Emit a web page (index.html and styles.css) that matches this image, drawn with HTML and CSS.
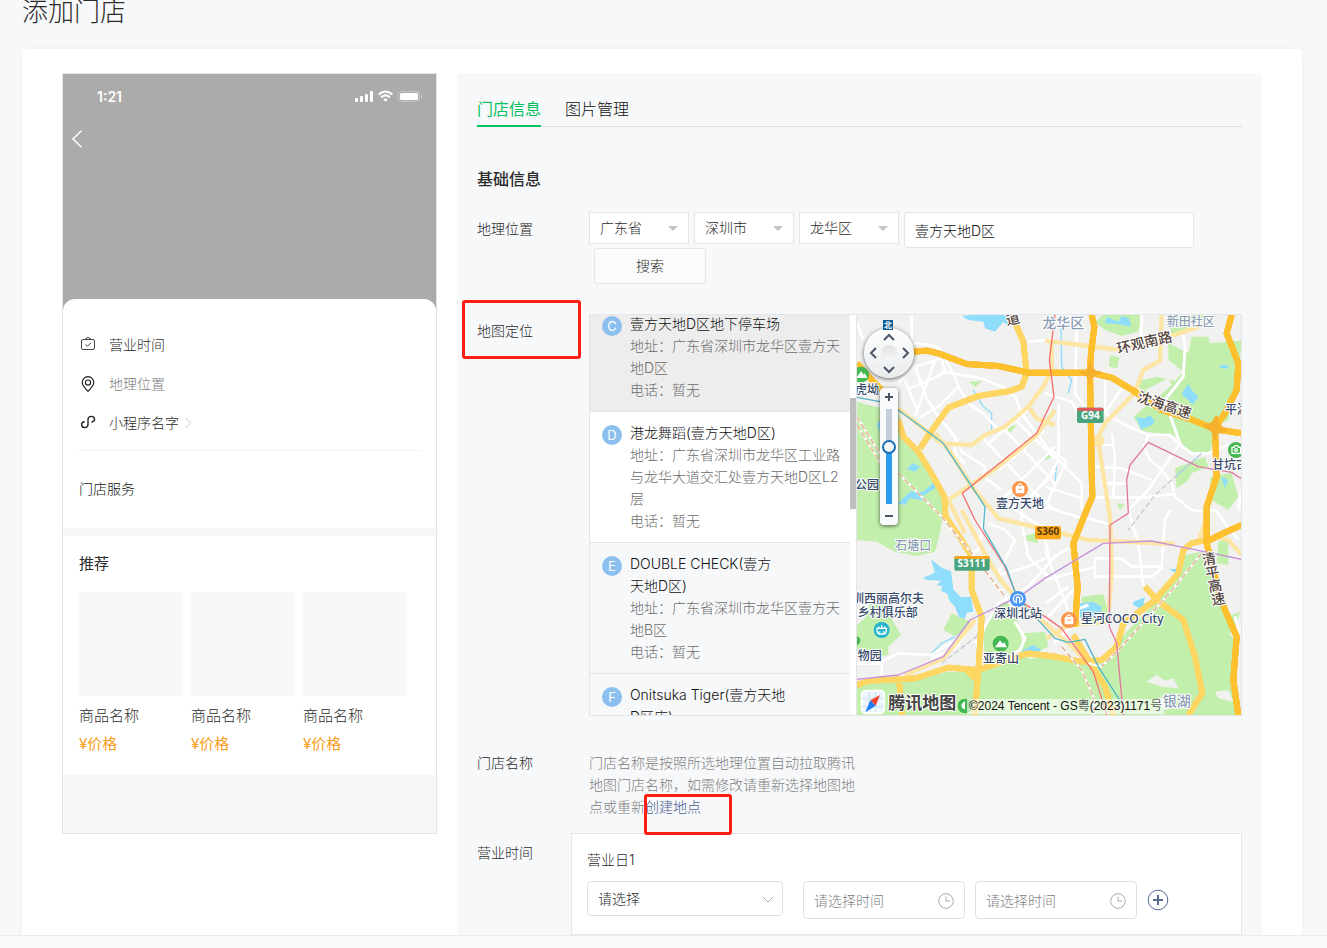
FILE: index.html
```html
<!DOCTYPE html>
<html lang="zh-CN">
<head>
    <meta charset="UTF-8">
    <meta name="viewport" content="width=device-width, initial-scale=1.0">
    <title>添加门店</title>
    <link rel="stylesheet" href="styles.css">
</head>
<body>
    <main class="page">
        <h1 class="page-title">添加门店</h1>

        <div class="card">
            <!-- Phone preview -->
            <section class="phone">
                <div class="cover">
                    <div class="status-bar">
                        <span class="clock">1:21</span>
                        <svg class="status-icons" viewBox="0 0 68 14" width="68" height="14">
                            <g fill="#fff">
                                <rect x="0" y="8" width="3" height="4" rx="1"/>
                                <rect x="5" y="6" width="3" height="6" rx="1"/>
                                <rect x="10" y="4" width="3" height="8" rx="1"/>
                                <rect x="15" y="1" width="3" height="11" rx="1"/>
                                <rect x="45" y="3" width="18" height="7" rx="1.5"/>
                                <path d="M66 5v3.500q1-.6 1-1.700T66 5z" opacity=".5"/>
                                <path d="M30.500 11.700l-2.300-2.300q2.300-1.700 4.600 0z"/>
                            </g>
                            <rect x="43.500" y="1.500" width="21" height="10" rx="2.500" fill="none" stroke="#fff" opacity=".3"/>
                            <path d="M23.600 4.400q6.900-5.800 13.800 0M26 7.200q4.500-3.700 9 0" fill="none" stroke="#fff" stroke-width="2"/>
                        </svg>
                    </div>
                    <button type="button" class="back" aria-label="返回">
                        <svg viewBox="0 0 12 18" width="12" height="18"><path d="M10.500 .800L2 9l8.500 8.200" fill="none" stroke="#fff" stroke-width="1.500"/></svg>
                    </button>
                </div>

                <div class="sheet">
                    <ul class="store-rows">
                        <li>
                            <svg viewBox="0 0 16 16" width="16" height="16" fill="none" stroke="#444"><rect x="1.500" y="2.500" width="13" height="10" rx="1.500"/><path d="M4.500 2.500L8 .300l3.500 2.200M5.500 7.500l2 1.800 3.500-3.500"/></svg>
                            <span>营业时间</span>
                        </li>
                        <li class="muted">
                            <svg viewBox="0 0 16 16" width="16" height="16" fill="none" stroke="#222" stroke-width="1.200"><path d="M8 15.300C4.500 11.800 2.200 9.300 2.200 6.500a5.800 5.800 0 0 1 11.600 0c0 2.800-2.300 5.300-5.800 8.800z"/><circle cx="8" cy="6.600" r="2.600"/></svg>
                            <span>地理位置</span>
                        </li>
                        <li>
                            <svg viewBox="0 0 16 16" width="16" height="16" fill="none" stroke="#222" stroke-width="1.400" stroke-linecap="round"><path d="M4.200 6.800C.500 7.500 1 12.500 4.500 12.500c2 0 3.500-1.300 3.500-3V4.400c0-1.700 1.400-3 3.300-3 3.800 0 4.500 4.800.700 5.600"/></svg>
                            <span>小程序名字</span>
                            <svg class="more" viewBox="0 0 6 12" width="6" height="12"><path d="M.500 1L5.500 6l-5 5" fill="none" stroke="#ccc"/></svg>
                        </li>
                    </ul>
                    <div class="service">门店服务</div>
                </div>

                <div class="recommend">
                    <h2 class="recommend-title">推荐</h2>
                    <ul class="goods">
                        <li><div class="thumb"></div><p>商品名称</p><p class="price">¥价格</p></li>
                        <li><div class="thumb"></div><p>商品名称</p><p class="price">¥价格</p></li>
                        <li><div class="thumb"></div><p>商品名称</p><p class="price">¥价格</p></li>
                    </ul>
                </div>
            </section>

            <!-- Edit form -->
            <section class="panel">
                <nav class="tabs">
                    <a href="#info" class="tab active">门店信息</a>
                    <a href="#pics" class="tab">图片管理</a>
                </nav>

                <form id="info">
                    <h2 class="section-title">基础信息</h2>

                    <div class="row">
                        <label class="label" for="address">地理位置</label>
                        <div class="address">
                            <span class="picker"><select aria-label="省"><option>广东省</option></select></span>
                            <span class="picker"><select aria-label="市"><option>深圳市</option></select></span>
                            <span class="picker"><select aria-label="区"><option>龙华区</option></select></span>
                            <input type="text" id="address" class="text-box" value="壹方天地D区">
                            <button type="button" class="search">搜索</button>
                        </div>
                    </div>

                    <div class="row row-map">
                        <span class="label"><span class="mark mark-label">地图定位</span></span>
                        <div class="locator">
                            <div class="places">
                                <ul class="place-list">
                                    <li class="place hover">
                                        <span class="badge">C</span>
                                        <div><h3>壹方天地D区地下停车场</h3><p>地址：广东省深圳市龙华区壹方天地D区</p><p>电话：暂无</p></div>
                                    </li>
                                    <li class="place current">
                                        <span class="badge">D</span>
                                        <div><h3>港龙舞蹈(壹方天地D区)</h3><p>地址：广东省深圳市龙华区工业路与龙华大道交汇处壹方天地D区L2层</p><p>电话：暂无</p></div>
                                    </li>
                                    <li class="place">
                                        <span class="badge">E</span>
                                        <div><h3>DOUBLE CHECK(壹方<br>天地D区)</h3><p>地址：广东省深圳市龙华区壹方天地B区</p><p>电话：暂无</p></div>
                                    </li>
                                    <li class="place">
                                        <span class="badge">F</span>
                                        <div><h3>Onitsuka Tiger(壹方天地D区店)</h3></div>
                                    </li>
                                </ul>
                                <div class="scrollbar"><div class="scroll-thumb"></div></div>
                            </div>

                            <div class="map">
                                <svg class="map-canvas" viewBox="6 15 1155 1200" preserveAspectRatio="xMinYMin slice">
                                    <rect x="6" y="15" width="3000" height="1200" fill="#f1f1f0"/>
                                    <!-- parks -->
                                    <g fill="#c3efac">
                                        <path d="M6 275L60 290 130 300 150 400 200 440 265 545 262 630 250 690 240 725 185 738 120 725 65 695 6 690z"/>
                                        <path d="M6 945L30 925 50 870 105 875 112 930 138 975 100 1010 100 1035 40 1045 6 1030z"/>
                                        <path d="M290 910L345 935 345 960 300 978 265 960zM400 930L420 890 455 873 485 915 500 990 520 1050 440 1070 390 1045 385 980z"/>
                                        <path d="M6 1125L180 1110 280 1085 370 1085 470 1050 600 1040 740 1060 790 990 895 885 970 790 990 735 1040 725 1075 740 1090 840 1120 920 1155 905 1145 940 1125 970 1145 1010 1145 1215 6 1215z"/>
                                        <path d="M842 215L905 200 960 212 985 185 940 150 940 100 1000 130 1010 80 1060 80 1065 100 1160 92 1150 200 1120 330 1080 345 1065 430 1010 435 965 380 860 362 836 320 870 290 860 240z"/>
                                        <path d="M720 35L745 15 860 15 850 65 800 78 750 60zM765 135L792 142 788 175 762 170zM935 15L1060 15 1000 40 1010 62 950 72zM960 475L1050 440 1060 470 1010 490 1000 510 965 535zM1065 500L1130 488 1150 560 1120 600 1070 570zM680 860L745 852 758 900 745 945 680 935zM1090 695L1120 680 1120 765 1085 760zM565 435L590 422 592 440 572 450zM340 216L382 212 362 230zM450 350L485 345 465 370zM785 580L810 582 795 600z"/>
                                        <path d="M505 970L570 965 580 1010 540 1030 505 1030zM500 680L540 670 550 700 510 690z"/>
                                    </g>
                                    <g fill="#f1f1f0">
                                        <path d="M875 1115L905 1095 930 1112 955 1105 970 1135 920 1130zM1080 1145L1120 1140 1135 1175 1090 1165zM900 1170L935 1155 960 1170 960 1190 930 1200zM870 240L940 205 950 225 900 270z"/>
                                    </g>
                                    <!-- water -->
                                    <g fill="#8edefb">
                                        <path d="M320 18L350 15 455 15 460 50 445 35 420 65 390 55 385 35 340 30zM755 20L790 35 800 18 822 25 828 50 790 42 750 40z"/>
                                        <path d="M843 322L870 325 885 315 900 335 885 348 858 358 850 340zM990 235L1002 222 1010 240 1030 262 1012 285 995 265 980 255zM1095 165L1120 165 1118 176 1095 174z"/>
                                        <path d="M202 805L240 788 228 748 250 765 262 775 288 783 295 838 318 862 348 860 355 905 335 908 330 926 312 922 300 890 282 870 278 852 258 842 262 828 245 826 258 812 218 810z"/>
                                        <path d="M155 478L172 460 195 470 180 485zM128 580L165 545 205 545 250 505 240 535 200 560 210 572 165 565 150 585zM75 330L65 345 75 365z"/>
                                        <path d="M675 880L715 875 740 890 735 915 675 922zM835 875L870 862 865 880 890 890 860 898 835 885zM942 778L980 775 975 795zM500 1022L535 1005 560 1020 530 1035zM1098 500L1120 510 1110 535z"/>
                                    </g>
                                    <g fill="none" stroke="#8edefb" stroke-width="4">
                                        <path d="M618 30L620 170 650 210 640 250M615 330L600 520M355 240L385 290 410 310 410 360M965 495L1030 440M230 1030L260 1000 300 980"/>
                                    </g>
                                    <!-- minor roads -->
                                    <g class="road-edge"><use href="#minor"/></g>
                                    <g id="minor" class="road-fill">
                                        <path d="M6 40L25 90M170 15V100L230 105 260 120M130 220L180 170 260 145 270 185 245 200 165 235M180 170L215 265 250 320 300 380 300 430 330 460M150 210L190 310M240 150L180 320"/>
                                        <path d="M260 185L380 205 450 235 480 260 500 310 590 430M270 145L300 200 310 230 340 280 385 310 440 370M310 230L250 290 190 325M520 95L590 88"/>
                                        <path d="M385 385L540 550 600 600M440 350L600 520M480 330L600 445M300 380L320 425 390 470 385 500 440 540M570 360L430 480M600 410L450 560M600 480L500 590M530 290L400 400"/>
                                        <path d="M666 15L660 250 690 290M570 250L650 275 665 305M612 280L610 450 570 520M570 410L635 455 575 580M600 440L680 520 680 600M570 530L680 565M570 590L700 630"/>
                                        <path d="M750 210L750 300 735 340M800 235L750 310 820 350 880 375 945 375 975 405 1010 430 1060 430 1120 405 1160 400M985 75L990 110 985 200 930 270 950 330 975 400 920 480 880 540 820 600"/>
                                        <path d="M865 410L885 450 920 480 950 520 960 560 1010 600 1040 605M730 405L770 405M770 370L780 440 775 560M720 470L800 475 890 510M740 520L820 520M720 562L870 562 955 552M880 375L865 415M860 15L858 90"/>
                                        <path d="M500 600L500 640 520 740 580 800M400 640L450 660 480 690 430 790M390 600L370 720 330 740M480 600L560 650 585 750M430 795L520 770 570 745M360 1000L430 880 520 830 600 740 640 715"/>
                                        <path d="M570 810L720 770 720 745 800 745 830 770 920 770 930 630 945 600M720 770V800H890L925 770M820 600L850 700 865 830M700 625L770 645M570 720L640 900M570 880L640 830M570 930L655 840"/>
                                        <path d="M6 1060L70 1060 130 1030 230 1035 300 990M80 1050V1100M230 1045L300 1015 340 960M480 935L510 985 495 1020 430 1060M1040 605L1080 600 1150 690M1140 920L1155 970M660 900L700 885M595 1000L650 950M1160 540L1150 590 1160 600"/>
                                    </g>
                                    <!-- yellow roads -->
                                    <g fill="none" stroke="#fde5a3" stroke-width="13" stroke-linejoin="round">
                                        <path d="M130 295L260 400 350 405 390 375 450 350 520 290 565 230 590 180 590 100M570 92L700 108 780 118 900 95 1030 50M920 15L915 152 865 180 838 250 750 340 728 385 765 620 770 780 762 900"/>
                                        <path d="M240 370L285 425 350 530 410 600 430 625 600 665 700 690 960 702M600 300L545 375 430 470 280 570 330 670M320 600L400 750 440 815 490 870 640 1000 700 1060M520 290L545 325 600 345M360 930L265 1045 150 1095M575 985L640 945 770 935M1080 680L1120 690 1160 735M715 385H740V400H715M1030 695L1050 640 1065 640"/>
                                    </g>
                                    <g class="yellow-edge"><use href="#yellow"/></g>
                                    <g id="yellow" class="yellow-fill">
                                        <path d="M483 45L505 95 515 190 500 230 465 243 370 258 280 293 235 355 195 415"/>
                                        <path d="M130 330L145 380 190 425 235 500 268 560 272 620 320 690 350 740 350 840 380 920 372 1050 360 1215"/>
                                        <path d="M6 1125L40 1113 180 1105 280 1073 370 1080 470 1045 520 1030 600 1040 680 1055 740 1050 785 1010 805 940 895 875 970 790 985 720 1010 700 1055 690"/>
                                        <path d="M870 830L905 870 985 930 1020 1040 1042 1150 1000 1215M655 975L700 1050 750 1130 775 1215M133 1120L142 1215M335 1080L360 1105"/>
                                    </g>
                                    <!-- highways -->
                                    <g class="highway-edge"><use href="#highway"/></g>
                                    <g id="highway" class="highway-fill">
                                        <path d="M6 160L50 210 80 240M120 128L215 122 250 130 335 162 430 168 520 188 705 188 770 203 840 245 920 300 1000 325 1080 358 1160 370"/>
                                        <path d="M710 15L718 50 708 130 705 190 710 480 712 560 695 600 655 700 668 830 660 950"/>
                                        <path d="M1130 15L1115 70 1150 160 1145 240 1110 310 1080 355 1085 500 1055 590 1055 700 1090 840 1110 900 1145 980 1135 1110 1150 1215M1160 645L1100 672 1055 695"/>
                                    </g>
                                    <path d="M675 188Q705 190 705 155 708 190 738 188 705 190 705 222 705 190 675 188zM1045 345Q1075 350 1085 318 1085 350 1115 362 1080 360 1080 390 1080 355 1045 345z" fill="#f6b02c" stroke="#f6b02c" stroke-width="8"/>
                                    <!-- rail -->
                                    <g fill="none" stroke-width="4" stroke-linejoin="round">
                                        <path d="M6 320L80 440M6 345L80 465M130 490L260 620 350 730 450 860M1040 730L960 830 800 1010 740 1070 700 1060M620 1010L680 1080 715 1160V1215" stroke="#fff" stroke-width="7"/>
                                        <path d="M6 320L80 440M6 345L80 465M130 490L260 620 350 730 450 860M1040 730L960 830 800 1010 740 1070M620 1010L680 1080 715 1160V1215" stroke="#dfaa88" stroke-dasharray="18 8"/>
                                        <path d="M1040 430L900 555 820 660M260 1060L370 975" stroke="#c6c8d0" stroke-dasharray="16 8"/>
                                        <path d="M6 1108L130 1095 265 1040 345 930 500 855 570 805 745 700 890 693 1000 715 1160 748" stroke="#c592dc"/>
                                        <path d="M765 645L820 610 815 510 825 465 880 397 1030 470 1130 487 1160 507M765 645L763 950 785 1000 805 1215" stroke="#e2799f"/>
                                        <path d="M600 15L583 150 597 260 545 370 322 550 360 630 450 770 490 870 570 920 620 955 715 1085 755 1215" stroke="#f77072"/>
                                        <path d="M6 262L75 275 130 300 265 400 390 590 385 655 455 775 485 860 600 985 640 997 690 988 730 1070 800 1180" stroke="#53b5c5"/>
                                    </g>
                                    <!-- road shields -->
                                    <g class="shield">
                                        <rect x="666" y="293" width="80" height="46" rx="6" fill="#4aa57e"/><path d="M666 302v-3q0-6 6-6h68q6 0 6 6v3z" fill="#e35a5a"/>
                                        <text x="706" y="326" fill="#fff">G94</text>
                                        <rect x="298" y="738" width="106" height="44" rx="6" fill="#4aa57e"/><path d="M298 747v-3q0-6 6-6h94q6 0 6 6v3z" fill="#f5a623"/>
                                        <text x="350" y="770" fill="#fff">S3111</text>
                                        <rect x="540" y="648" width="78" height="40" rx="6" fill="#f9a819"/>
                                        <text x="579" y="674" fill="#5a3a0a">S360</text>
                                    </g>
                                    <!-- points of interest -->
                                    <g fill="none" stroke="#fff" stroke-width="4">
                                        <circle cx="495" cy="537" r="24" fill="#fb9549" stroke="none"/><path d="M484 530h22v18h-22z" fill="#fff"/><path d="M488 528q7-14 14 0"/><path d="M490 536q5 7 10 0" stroke="#fb9549" stroke-width="3"/>
                                        <circle cx="642" cy="930" r="24" fill="#fb9549" stroke="none"/><path d="M631 923h22v18h-22z" fill="#fff"/><path d="M635 921q7-14 14 0"/><path d="M637 929q5 7 10 0" stroke="#fb9549" stroke-width="3"/>
                                        <circle cx="489" cy="867" r="24" fill="#4796f5" stroke="none"/><path d="M481 877q-6-4-6-10a14 14 0 0 1 28 0q0 6-6 10M484 880v-14a5 5 0 0 1 10 0v14"/>
                                        <circle cx="437" cy="1001" r="24" fill="#45b854" stroke="none"/><path d="M420 1012l15-21 8 10 5-4 8 15z" fill="#fff" stroke="none"/>
                                        <circle cx="18" cy="194" r="24" fill="#45b854" stroke="none"/><path d="M4 204l14-20 8 10 4-4 7 14z" fill="#fff" stroke="none"/>
                                        <circle cx="80" cy="960" r="24" fill="#25b5cf" stroke="none"/><path d="M66 955h28v8q-2 9-8 9H74q-6 0-8-9zM80 946v12M70 950l4 6M90 950l-4 6M74 964v4M86 964v4"/>
                                        <circle cx="1143" cy="420" r="24" fill="#45b854" stroke="none"/><path d="M1131 412h6l3-5h8l3 5h6v18h-26z"/><circle cx="1143" cy="420" r="4"/>
                                        <circle cx="2" cy="992" r="14" fill="#45b854" stroke="none"/>
                                        <circle cx="330" cy="1188" r="22" fill="#45b854" stroke="none"/><path d="M330 1174q-14 8-10 16t10 8z" fill="#fff" stroke="none"/>
                                    </g>
                                    <g class="map-text">
                                        <text x="423" y="594">壹方天地</text>
                                        <text x="0" y="252">虎坳</text>
                                        <text x="0" y="537">公园</text>
                                        <text x="-9" y="878">圳西丽高尔夫</text>
                                        <text x="8" y="920">乡村俱乐部</text>
                                        <text x="8" y="1050">物园</text>
                                        <text x="417" y="924">深圳北站</text>
                                        <text x="384" y="1059">亚寄山</text>
                                        <text x="678" y="940">星河COCO City</text>
                                        <text x="1071" y="476">甘坑古镇</text>
                                        <text x="1110" y="312">平湖</text>
                                    </g>
                                    <g class="map-text area">
                                        <text x="562" y="54" class="big">龙华区</text>
                                        <text x="935" y="48">新田社区</text>
                                        <text x="121" y="720">石塘口</text>
                                        <text x="923" y="1188" class="big">银湖</text>
                                    </g>
                                    <g class="map-text street">
                                        <text transform="translate(456 46) rotate(-12)">道</text>
                                        <text transform="translate(790 131) rotate(-13)">环观南路</text>
                                        <text transform="translate(844 272) rotate(19)">沈海高速</text>
                                        <text transform="translate(1044 766) rotate(-10)">清</text>
                                        <text transform="translate(1054 806) rotate(-10)">平</text>
                                        <text transform="translate(1062 846) rotate(-10)">高</text>
                                        <text transform="translate(1072 886) rotate(-10)">速</text>
                                    </g>
                                    <!-- map logo -->
                                    <rect x="20" y="1142" width="68" height="68" rx="12" fill="#eef6fc" stroke="#fff" stroke-width="5"/>
                                    <path d="M42 1145v60M20 1165h66M62 1145v60M20 1190h66" stroke="#d5e9f6" stroke-width="5"/>
                                    <path d="M75 1155L46 1171 62 1187z" fill="#f4442e"/><path d="M31 1207L46 1171 62 1187z" fill="#1e7bf2"/>
                                    <text x="100" y="1196" class="map-brand">腾讯地图</text>
                                </svg>

                                <div class="pan">
                                    <button type="button" class="up" aria-label="向上"><svg viewBox="0 0 12 8" width="12" height="8"><path d="M1 7l5-5 5 5"/></svg></button>
                                    <button type="button" class="left" aria-label="向左"><svg viewBox="0 0 8 12" width="8" height="12"><path d="M7 1L2 6l5 5"/></svg></button>
                                    <span class="hub"></span>
                                    <button type="button" class="right" aria-label="向右"><svg viewBox="0 0 8 12" width="8" height="12"><path d="M1 1l5 5-5 5"/></svg></button>
                                    <button type="button" class="down" aria-label="向下"><svg viewBox="0 0 12 8" width="12" height="8"><path d="M1 1l5 5 5-5"/></svg></button>
                                </div>
                                <span class="north">北</span>
                                <div class="zoom">
                                    <button type="button" aria-label="放大"><svg viewBox="0 0 10 10" width="10" height="10"><path d="M5 1v8M1 5h8"/></svg></button>
                                    <input type="range" min="0" max="100" value="62" aria-label="缩放">
                                    <button type="button" aria-label="缩小"><svg viewBox="0 0 10 10" width="10" height="10"><path d="M1 5h8"/></svg></button>
                                </div>
                                <span class="copyright">©2024 Tencent - GS粤(2023)1171号</span>
                            </div>
                        </div>
                    </div>

                    <div class="row row-name">
                        <span class="label">门店名称</span>
                        <p class="help">门店名称是按照所选地理位置自动拉取腾讯地图门店名称，如需修改请重新选择地图地点或重新<a href="#create" class="mark mark-link">创建地点</a></p>
                    </div>

                    <div class="row row-hours">
                        <label class="label" for="day">营业时间</label>
                        <div class="hours">
                            <p>营业日1</p>
                            <div class="hours-fields">
                                <span class="day">
                                    <select id="day"><option>请选择</option></select>
                                    <svg viewBox="0 0 12 8" width="12" height="8"><path d="M1 1l5 5 5-5" fill="none" stroke="#aaa"/></svg>
                                </span>
                                <span class="time">
                                    <input type="text" placeholder="请选择时间" aria-label="开始时间">
                                    <svg viewBox="0 0 16 16" width="16" height="16"><circle cx="8" cy="8" r="7.300"/><path d="M8 3.500V8h4"/></svg>
                                </span>
                                <span class="time">
                                    <input type="text" placeholder="请选择时间" aria-label="结束时间">
                                    <svg viewBox="0 0 16 16" width="16" height="16"><circle cx="8" cy="8" r="7.300"/><path d="M8 3.500V8h4"/></svg>
                                </span>
                                <button type="button" class="add" aria-label="添加时间">
                                    <svg viewBox="0 0 22 22" width="22" height="22"><circle cx="11" cy="11" r="9.800"/><path d="M11 6v10M6 11h10" stroke-width="2"/></svg>
                                </button>
                            </div>
                        </div>
                    </div>
                </form>
            </section>
        </div>
    </main>
    <footer class="bottom-bar"></footer>
</body>
</html>
```
FILE: styles.css
```css
*, *::after {
    box-sizing: border-box;
}
body {
    margin: 0;
    height: 100vh;
    display: flex;
    flex-direction: column;
    background-color: #f7f8fa;
    color: #2b2b2b;
    font-family: Inter, "Noto Sans CJK SC", sans-serif;
    font-size: 14px;
    font-weight: 300;
    line-height: 22px;
}
h1, h2, h3, p, ul {
    margin: 0;
    padding: 0;
    list-style: none;
    font-weight: 300;
}
button, input, select {
    font: inherit;
    color: inherit;
}
button {
    padding: 0;
    border: 0;
    background: none;
    cursor: pointer;
}
svg {
    display: block;
}

.page {
    flex: 1;
    min-height: 0;
    display: flex;
    flex-direction: column;
    overflow: hidden;
    padding: 0 25px 0 22px;
}
.page-title {
    flex: none;
    height: 49px;
    font-size: 26px;
    line-height: 24px;
}
.card {
    flex: 1 0 auto;
    display: flex;
    gap: 20px;
    padding: 24px 40px 0;
    background: #fff;
    border-radius: 2px;
    box-shadow: 0 0 10px rgba(0, 0, 0, 0.03);
}
.bottom-bar {
    flex: none;
    height: 13px;
    background: #f9f9f9;
    border-top: 1px solid #ececec;
}

/* phone preview */
.phone {
    flex: none;
    align-self: flex-start;
    width: 375px;
    padding-bottom: 58px;
    border: 1px solid #e4e4e6;
    background: #f6f6f6;
}
.cover {
    height: 237px;
    padding: 12px 13px 0 8px;
    background: #ababab;
}
.status-bar {
    display: flex;
    justify-content: space-between;
    align-items: center;
    padding-left: 26px;
    color: #fff;
}
.clock {
    font-size: 14px;
    font-weight: 600;
}
.back {
    display: block;
    margin-top: 22px;
}
.sheet {
    margin-top: -12px;
    padding: 26px 16px 0;
    border-radius: 12px 12px 0 0;
    background: #fff;
}
.store-rows {
    padding-bottom: 8px;
    border-bottom: 1px solid #f2f2f2;
}
.store-rows li {
    display: flex;
    align-items: center;
    height: 39px;
    padding-left: 1px;
}
.store-rows span {
    padding-left: 13px;
}
.store-rows .muted {
    color: #808080;
}
.more {
    margin-left: 6px;
}
.service {
    line-height: 76px;
    padding-bottom: 1px;
    color: #111;
}
.recommend {
    margin-top: 8px;
    padding: 0 16px 17px;
    background: #fff;
    font-size: 15px;
}
.recommend-title {
    font-size: 15px;
    font-weight: 400;
    line-height: 56px;
}
.goods {
    display: flex;
    gap: 8px;
}
.goods p {
    line-height: 28px;
}
.goods .price {
    color: #fa9d1b;
    font-weight: 400;
}
.thumb {
    width: 104px;
    height: 104px;
    margin-bottom: 6px;
    background: #f7f8fa;
}

/* form panel */
.panel {
    flex: 1;
    min-width: 0;
    padding: 20px;
    background: #f7f8fa;
}
.tabs {
    display: flex;
    gap: 24px;
    border-bottom: 1px solid #dfe0e3;
    font-size: 16px;
    line-height: 32px;
}
.tab {
    margin-bottom: -1px;
    border-bottom: 2px solid transparent;
    color: #111;
    text-decoration: none;
}
.tab.active {
    color: #07c160;
    border-color: #07c160;
    font-weight: 400;
}
.section-title {
    margin: 40px 0 21px;
    font-size: 16px;
    font-weight: 500;
    line-height: 24px;
}
.row {
    display: flex;
    align-items: flex-start;
}
.label {
    flex: none;
    width: 112px;
    padding-top: 6px;
}
.address {
    flex: 1;
    display: flex;
    flex-wrap: wrap;
    align-items: flex-start;
    column-gap: 5px;
}
.picker, .day, .time {
    position: relative;
}
.picker::after {
    content: "";
    position: absolute;
    right: 11px;
    top: 14px;
    border: 5px solid transparent;
    border-top-color: #c4c4c4;
    border-bottom: 0;
    pointer-events: none;
}
.picker select {
    display: block;
    appearance: none;
    width: 100px;
    height: 32px;
    padding: 0 10px;
    border: 1px solid #e4e5e8;
    border-radius: 0;
    background: #fff;
}
.text-box {
    width: 290px;
    height: 36px;
    padding: 0 10px;
    border: 1px solid #e4e5e8;
    border-radius: 3px;
    color: #111;
}
.search {
    width: 112px;
    height: 36px;
    margin-left: 5px;
    border: 1px solid #e4e5e8;
    border-radius: 3px;
    background: #fbfbfc;
}

/* red highlight frames */
.mark {
    position: relative;
}
.mark::after {
    content: "";
    position: absolute;
    border: 3px solid #ff1f12;
    border-radius: 3px;
    pointer-events: none;
}
.mark-label::after {
    left: -15px;
    top: -20px;
    width: 119px;
    height: 59px;
}
.mark-link::after {
    left: -1px;
    top: -2px;
    width: 88px;
    height: 41px;
}

.row-map {
    margin-top: 30px;
}
.row-map .label {
    display: flex;
}
.locator {
    flex: 1;
    display: flex;
    height: 402px;
    border: 1px solid #e4e5e8;
}
.places {
    flex: none;
    display: flex;
    width: 267px;
    overflow: hidden;
    border-right: 1px solid #e4e5e8;
}
/* list is scrolled down to the third result */
.place-list {
    flex: 1;
    margin-top: -12px;
}
.place {
    display: flex;
    gap: 8px;
    padding: 10px 8px 10px 12px;
    border-bottom: 1px solid #e4e5e8;
}
.place.hover {
    background: #ededed;
}
.place.current {
    background: #fff;
}
.place h3 {
    max-width: 158px;
    font-size: 14px;
    color: #111;
}
.place p {
    color: #6c6c6c;
}
.badge {
    flex: none;
    width: 20px;
    height: 20px;
    margin-top: 3px;
    border-radius: 50%;
    background: #8bbfee;
    color: #fff;
    font-size: 13px;
    font-weight: 400;
    line-height: 20px;
    text-align: center;
}
.scrollbar {
    width: 6px;
    padding-top: 83px;
    background: #fff;
}
.scroll-thumb {
    height: 111px;
    background: #bfbfbf;
}

/* map */
.map {
    position: relative;
    flex: 1;
    overflow: hidden;
}
.map-canvas {
    width: 100%;
    height: 100%;
}
.road-edge, .road-fill, .yellow-edge, .yellow-fill, .highway-edge, .highway-fill {
    fill: none;
    stroke-linejoin: round;
}
.road-fill {
    stroke: #fff;
    stroke-width: 8px;
}
.road-edge {
    filter: drop-shadow(0 0 2px #c9cedb);
}
.yellow-fill {
    stroke: #ffd661;
    stroke-width: 17px;
}
.yellow-edge {
    filter: drop-shadow(0 0 2px #e8b84a);
}
.highway-fill {
    stroke: #ffc02e;
    stroke-width: 18px;
}
.highway-edge {
    filter: drop-shadow(0 0 2px #d99a20);
}
.shield {
    font-family: "Noto Sans", sans-serif;
    font-size: 30px;
    font-weight: 700;
    text-anchor: middle;
}
.map-text, .map-brand {
    font-family: "Noto Sans", "Noto Sans CJK SC", sans-serif;
    font-size: 36px;
    font-weight: 500;
    fill: #35496a;
    stroke: #fff;
    stroke-width: 6px;
    stroke-linejoin: round;
    paint-order: stroke;
}
.area {
    fill: #8c9db3;
}
.area .big {
    font-size: 42px;
}
.street {
    font-size: 42px;
    fill: #54463e;
}
.map-brand {
    font-size: 51px;
    font-weight: 700;
    fill: #444;
}
.pan {
    position: absolute;
    left: 7px;
    top: 13px;
    width: 50px;
    height: 50px;
    display: grid;
    grid-template: 17px 16px 17px / 17px 16px 17px;
    place-items: center;
    border-radius: 50%;
    background: linear-gradient(#fff, #e9ebed);
    box-shadow: 0 1px 4px rgba(0, 0, 0, 0.6);
}
.pan path, .zoom path {
    fill: none;
    stroke: #4b5566;
    stroke-width: 2px;
}
.up, .down {
    grid-column: 2;
}
.left, .right, .hub {
    grid-row: 2;
}
.up {
    grid-row: 1;
}
.down {
    grid-row: 3;
}
.hub {
    width: 16px;
    height: 16px;
    border-radius: 50%;
    background: linear-gradient(#dfe1e4, #f8f8f8);
}
.north {
    position: absolute;
    left: 26px;
    top: 5px;
    padding: 0 1px;
    background: #0b5c93;
    color: #fff;
    font-family: "Noto Sans CJK SC", sans-serif;
    font-size: 8px;
    font-weight: 700;
    line-height: 10px;
}
.zoom {
    position: absolute;
    left: 23px;
    top: 73px;
    width: 18px;
    height: 137px;
    display: flex;
    flex-direction: column;
    align-items: center;
    border-radius: 4px;
    background: #f9fafb;
    box-shadow: 0 1px 4px rgba(0, 0, 0, 0.6);
}
.zoom button {
    display: grid;
    place-items: center;
    width: 18px;
    height: 18px;
}
.zoom input {
    appearance: none;
    writing-mode: vertical-lr;
    direction: rtl;
    flex: 1;
    min-height: 0;
    width: 14px;
    margin: 3px 0;
    background: linear-gradient(#c5cedd 40%, #2c9ced 40%) center / 6px 100% no-repeat;
}
.zoom input::-webkit-slider-thumb {
    appearance: none;
    width: 14px;
    height: 14px;
    border: 2px solid #1f6eb5;
    border-radius: 50%;
    background: #f4f6f8;
}
.copyright {
    position: absolute;
    left: 110px;
    bottom: 1px;
    padding: 0 2px;
    background: rgba(255, 255, 255, 0.6);
    color: #111;
    font-family: "Liberation Sans", "Noto Sans CJK SC", sans-serif;
    font-size: 12px;
    line-height: 15px;
    white-space: nowrap;
}

.row-name {
    margin-top: 36px;
}
.row-name .label {
    padding-top: 0;
}
.help {
    max-width: 268px;
    color: #808080;
}
.help a {
    display: inline-block;
    color: #455c8d;
    text-decoration: none;
}
.row-hours {
    margin-top: 15px;
}
.row-hours .label {
    width: 94px;
    padding-top: 9px;
}
.hours {
    flex: 1;
    padding: 15px;
    border: 1px solid #e4e5e8;
    background: #fff;
}
.hours-fields {
    display: flex;
    align-items: flex-start;
    gap: 10px;
    margin-top: 10px;
}
.day {
    margin-right: 10px;
}
.day select {
    display: block;
    appearance: none;
    width: 196px;
    height: 35px;
    padding: 0 10px;
    border: 1px solid #dcdfe6;
    border-radius: 4px;
    background: #fff;
}
.day svg {
    position: absolute;
    right: 9px;
    top: 15px;
    pointer-events: none;
}
.time input {
    display: block;
    width: 162px;
    height: 38px;
    padding: 0 10px;
    border: 1px solid #dcdfe6;
    border-radius: 4px;
    background: #fff;
}
.time input::placeholder {
    color: #808080;
}
.time svg {
    position: absolute;
    right: 11px;
    top: 12px;
    fill: none;
    stroke: #aaa;
}
.add {
    margin-top: 8px;
}
.add svg {
    fill: none;
    stroke: #576b95;
}
```
